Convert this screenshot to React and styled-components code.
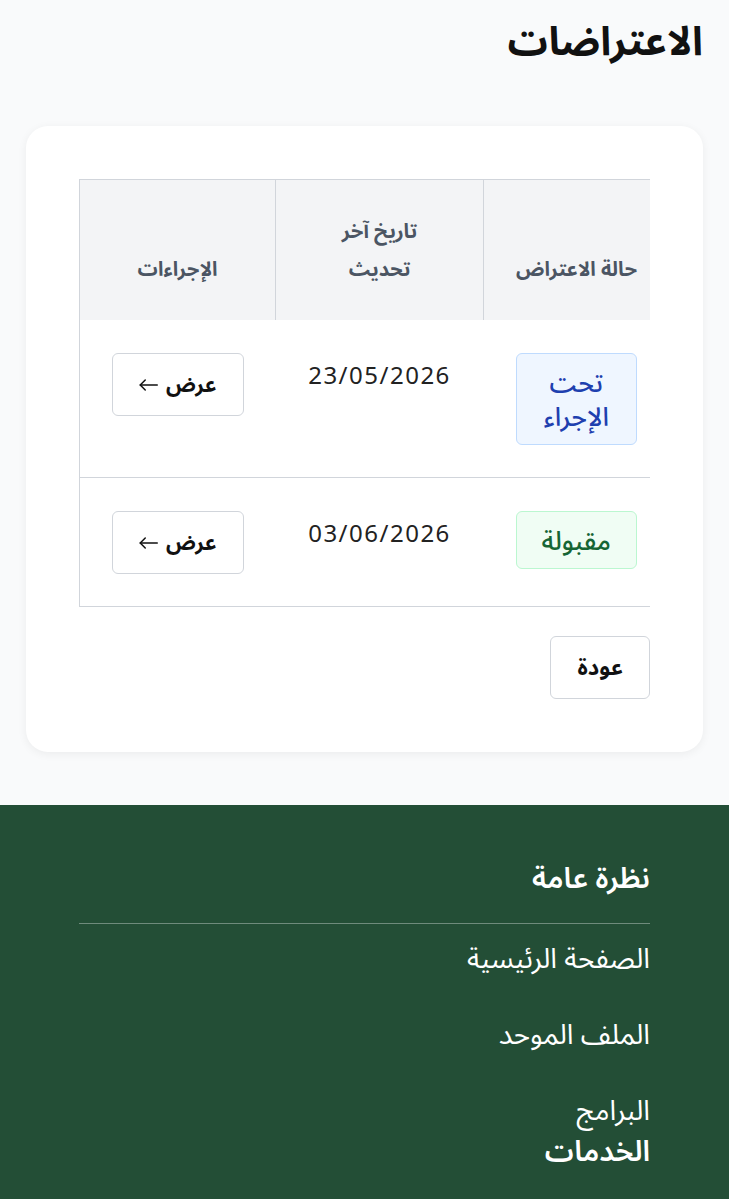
import React from 'react'
import styled, { createGlobalStyle } from 'styled-components'

const GlobalStyle = createGlobalStyle`
  body {
    margin: 0;
    background: #f9fafb;
    font-family: "Noto Sans", "Noto Sans Arabic", "Noto Naskh Arabic", "DejaVu Sans", sans-serif;
    color: #111827;
  }
`

const Page = styled.div`
  direction: rtl;
  min-height: 100vh;
`

const Main = styled.main`
  padding: 12px 26px 53px;
`

const Title = styled.h1`
  margin: 0 0 58px;
  font-size: 40px;
  line-height: 56px;
  font-weight: 700;
  color: #111;
`

const Card = styled.section`
  background: #fff;
  border-radius: 22px;
  padding: 53px;
  box-shadow: 0 2px 10px rgba(0, 0, 0, 0.06);
`

const TableScroll = styled.div`
  direction: ltr;
  overflow-x: auto;
  scrollbar-width: none;
  &::-webkit-scrollbar { display: none; }
`

const Table = styled.table`
  direction: rtl;
  border-collapse: collapse;
  border: 1px solid #d1d5db;
  table-layout: fixed;
  width: 590px;
`

const Th = styled.th`
  box-sizing: border-box;
  width: ${p => p.$w}px;
  background: #f3f4f6;
  border: 1px solid #d1d5db;
  border-bottom: none;
  padding: 32px 24px;
  font-size: 20px;
  line-height: 38px;
  font-weight: 700;
  color: #4b5563;
  text-align: center;
  vertical-align: bottom;
`

const HeadLabel = styled.span`
  display: inline-block;
  max-width: 130px;
`

const Td = styled.td`
  padding: 33px 32px 32px;
  border-bottom: 1px solid #d1d5db;
  text-align: center;
  vertical-align: top;
`

const DateText = styled.span`
  font-size: 24px;
  line-height: 44px;
  letter-spacing: 1.5px;
  color: #222;
`

const Badge = styled.span`
  display: block;
  padding: 11px 8px;
  border-radius: 6px;
  font-size: 26px;
  line-height: 34px;
  font-weight: 500;
  border: 1px solid ${p => (p.$tone === 'green' ? '#bbf7d0' : '#bfdbfe')};
  background: ${p => (p.$tone === 'green' ? '#f0fdf4' : '#eff6ff')};
  color: ${p => (p.$tone === 'green' ? '#166534' : '#1e40af')};
`

const Button = styled.button`
  display: inline-flex;
  align-items: center;
  justify-content: center;
  gap: 8px;
  box-sizing: border-box;
  height: 63px;
  width: ${p => (p.$full ? '100%' : 'auto')};
  padding: 0 26px;
  background: #fff;
  border: 1.5px solid #d1d5db;
  border-radius: 6px;
  font-family: inherit;
  font-size: ${p => (p.$full ? '21px' : '22px')};
  font-weight: 700;
  color: #111;
  cursor: pointer;
`

const Actions = styled.div`
  display: flex;
  justify-content: flex-start;
  margin-top: 29px;
`

const Footer = styled.footer`
  background: #234e36;
  color: #fff;
  padding: 51px 79px 90px;
`

const FooterSection = styled.div`
  display: flex;
  flex-direction: column;
`

const FooterHeading = styled.h3`
  margin: 0;
  font-size: 29px;
  line-height: 42px;
  font-weight: 600;
  padding-bottom: ${p => (p.$ruled ? '25px' : '0')};
  border-bottom: ${p => (p.$ruled ? '1px solid rgba(255,255,255,0.35)' : 'none')};
`

const FooterLinks = styled.ul`
  list-style: none;
  margin: 0;
  padding: 13px 0 0;
  display: flex;
  flex-direction: column;
  gap: 36px;
`

const FooterLink = styled.a`
  font-size: 28px;
  line-height: 40px;
  color: #fff;
  text-decoration: none;
`

const ArrowLeft = () => (
  <svg width="23" height="14" viewBox="0 0 23 14" fill="none" stroke="currentColor" strokeWidth="1.8" strokeLinecap="round" strokeLinejoin="round">
    <path d="M22 7H1.5" />
    <path d="M7.5 1L1.5 7l6 6" />
  </svg>
)

const rows = [
  { id: 1, status: 'تحت الإجراء', tone: 'blue', date: '23/05/2026' },
  { id: 2, status: 'مقبولة', tone: 'green', date: '03/06/2026' },
]

const overview = ['الصفحة الرئيسية', 'الملف الموحد', 'البرامج']

const App = () => (
  <Page>
    <GlobalStyle />
    <Main>
      <Title>الاعتراضات</Title>
      <Card>
        <TableScroll>
          <Table>
            <thead>
              <tr>
                <Th $w={186}><HeadLabel>حالة الاعتراض</HeadLabel></Th>
                <Th $w={208}><HeadLabel>تاريخ آخر تحديث</HeadLabel></Th>
                <Th $w={196}><HeadLabel>الإجراءات</HeadLabel></Th>
              </tr>
            </thead>
            <tbody>
              {rows.map(row => (
                <tr key={row.id}>
                  <Td><Badge $tone={row.tone}>{row.status}</Badge></Td>
                  <Td><DateText>{row.date}</DateText></Td>
                  <Td><Button $full>عرض <ArrowLeft /></Button></Td>
                </tr>
              ))}
            </tbody>
          </Table>
        </TableScroll>
        <Actions>
          <Button>عودة</Button>
        </Actions>
      </Card>
    </Main>
    <Footer>
      <FooterSection>
        <FooterHeading $ruled>نظرة عامة</FooterHeading>
        <FooterLinks>
          {overview.map(link => (
            <li key={link}><FooterLink href="#">{link}</FooterLink></li>
          ))}
        </FooterLinks>
      </FooterSection>
      <FooterSection>
        <FooterHeading>الخدمات</FooterHeading>
      </FooterSection>
    </Footer>
  </Page>
)

export default App
